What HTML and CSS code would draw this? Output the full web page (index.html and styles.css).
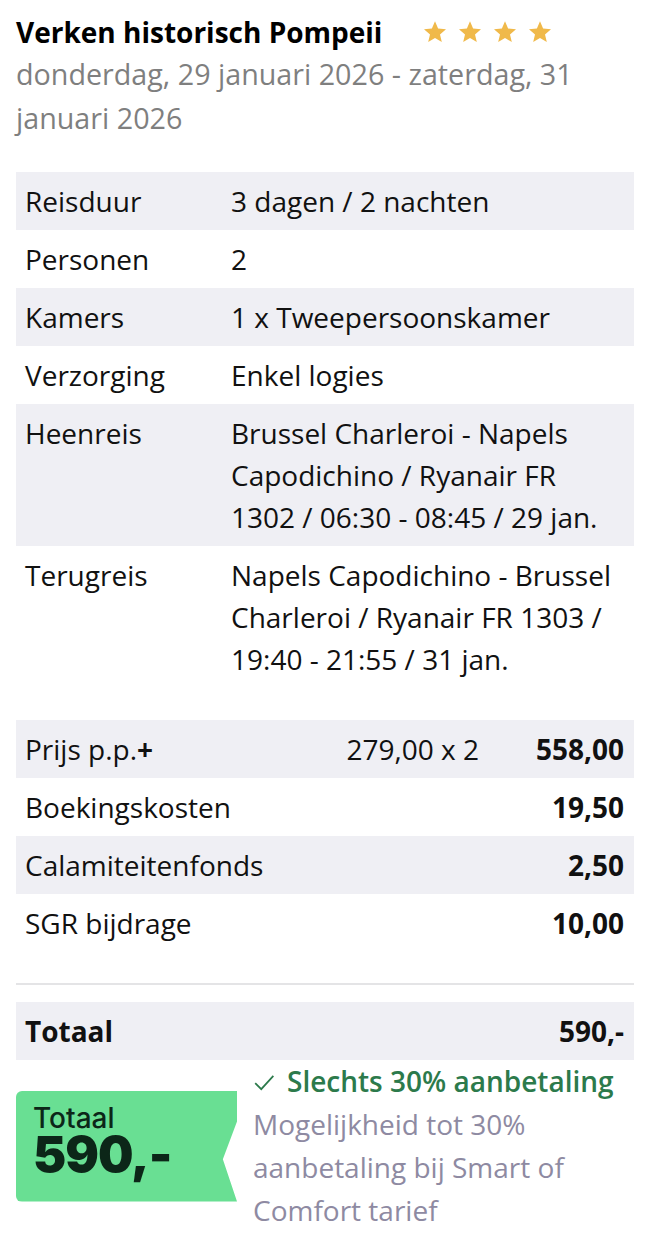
FILE: index.html
```html
<!DOCTYPE html>
<html lang="nl">
<head>
<meta charset="utf-8">
<title>Verken historisch Pompeii</title>
<link rel="stylesheet" href="styles.css">
</head>
<body>
<div class="page">
  <header class="header">
    <div class="title-row">
      <h1 class="title">Verken historisch Pompeii</h1>
      <div class="stars">
        <svg class="star" viewBox="0 0 24 24"><path d="M12 1.2l3.1 7.3 7.9.7-6 5.2 1.8 7.7L12 18l-6.8 4.1 1.8-7.7-6-5.2 7.9-.7z"/></svg>
        <svg class="star" viewBox="0 0 24 24"><path d="M12 1.2l3.1 7.3 7.9.7-6 5.2 1.8 7.7L12 18l-6.8 4.1 1.8-7.7-6-5.2 7.9-.7z"/></svg>
        <svg class="star" viewBox="0 0 24 24"><path d="M12 1.2l3.1 7.3 7.9.7-6 5.2 1.8 7.7L12 18l-6.8 4.1 1.8-7.7-6-5.2 7.9-.7z"/></svg>
        <svg class="star" viewBox="0 0 24 24"><path d="M12 1.2l3.1 7.3 7.9.7-6 5.2 1.8 7.7L12 18l-6.8 4.1 1.8-7.7-6-5.2 7.9-.7z"/></svg>
      </div>
    </div>
    <p class="dates">donderdag, 29 januari 2026 - zaterdag, 31 januari 2026</p>
  </header>

  <div class="info">
    <div class="info-row alt"><div class="info-label">Reisduur</div><div class="info-value">3 dagen / 2 nachten</div></div>
    <div class="info-row"><div class="info-label">Personen</div><div class="info-value">2</div></div>
    <div class="info-row alt"><div class="info-label">Kamers</div><div class="info-value">1 x Tweepersoonskamer</div></div>
    <div class="info-row"><div class="info-label">Verzorging</div><div class="info-value">Enkel logies</div></div>
    <div class="info-row alt"><div class="info-label">Heenreis</div><div class="info-value">Brussel Charleroi - Napels Capodichino / Ryanair FR 1302 / 06:30 - 08:45 / 29 jan.</div></div>
    <div class="info-row"><div class="info-label">Terugreis</div><div class="info-value">Napels Capodichino - Brussel Charleroi / Ryanair FR 1303 / 19:40 - 21:55 / 31 jan.</div></div>
  </div>

  <div class="prices">
    <div class="price-row alt"><div class="price-label">Prijs p.p.<b>+</b></div><div class="price-mid">279,00 x 2</div><div class="price-amount">558,00</div></div>
    <div class="price-row"><div class="price-label">Boekingskosten</div><div class="price-mid"></div><div class="price-amount">19,50</div></div>
    <div class="price-row alt"><div class="price-label">Calamiteitenfonds</div><div class="price-mid"></div><div class="price-amount">2,50</div></div>
    <div class="price-row"><div class="price-label">SGR bijdrage</div><div class="price-mid"></div><div class="price-amount">10,00</div></div>
  </div>

  <hr class="divider">

  <div class="total-row alt"><div class="total-label">Totaal</div><div class="total-amount">590,-</div></div>

  <div class="summary">
    <div class="badge">
      <div class="badge-label">Totaal</div>
      <div class="badge-price">590,-</div>
    </div>
    <div class="deposit">
      <div class="deposit-head"><svg class="check" viewBox="0 0 20 20"><polyline points="2,11 7.5,16.5 18.5,4.5"/></svg>Slechts 30% aanbetaling</div>
      <div class="deposit-text">Mogelijkheid tot 30% aanbetaling bij Smart of Comfort tarief</div>
    </div>
  </div>
</div>
</body>
</html>
```

FILE: styles.css
```css
* { box-sizing: border-box; }

body {
  margin: 0;
  background: #ffffff;
  font-family: "Open Sans", "Noto Sans", sans-serif;
  color: #111111;
}

.page {
  padding: 10px 28px 0 16px;
  width: 662px;
}

.title-row {
  display: flex;
  align-items: center;
  gap: 41px;
}

.title {
  margin: 0;
  font-size: 28px;
  line-height: 44px;
  font-weight: 700;
  color: #000;
}

.stars {
  display: flex;
  gap: 11px;
}

.star {
  width: 24px;
  height: 24px;
  fill: #f0b94a;
}

.dates {
  margin: -2px 0 0;
  font-size: 28.7px;
  line-height: 44px;
  color: #7f7f7f;
}

.info {
  margin-top: 32px;
}

.info-row {
  display: flex;
  padding: 8px 8px 8px 9px;
  font-size: 28px;
  line-height: 42px;
}

.alt { background: #efeff4; }

.info-label {
  width: 206px;
  flex: none;
}

.info-value {
  flex: 1;
}

.prices {
  margin-top: 32px;
}

.price-row {
  display: grid;
  grid-template-columns: 1fr auto 145px;
  padding: 8px 10px 8px 9px;
  font-size: 28px;
  line-height: 42px;
}

.price-mid { text-align: right; }

.price-amount {
  text-align: right;
  font-weight: 700;
}

.divider {
  margin: 31px 0 17px;
  border: none;
  height: 2px;
  background: #e4e4e6;
}

.total-row {
  display: flex;
  justify-content: space-between;
  padding: 8px 10px 8px 9px;
  font-size: 28px;
  line-height: 42px;
  font-weight: 700;
}

.summary {
  display: flex;
  align-items: center;
  gap: 16px;
}

.badge {
  flex: none;
  width: 221px;
  height: 111px;
  background: #69df93;
  border-radius: 6px 0 0 6px;
  clip-path: polygon(0 0, 100% 0, 100% 28%, 93.6% 62%, 100% 100%, 0 100%);
  padding: 13px 0 0 17px;
  color: #0c2618;
  font-family: Inter, "Liberation Sans", sans-serif;
}

.badge-label {
  font-size: 28px;
  line-height: 28px;
  font-weight: 500;
}

.badge-price {
  font-size: 50px;
  line-height: 44px;
  font-weight: 900;
  letter-spacing: -1px;
}

.deposit {
  flex: 1;
  font-size: 28px;
  line-height: 43px;
}

.deposit-head {
  color: #2c7a4b;
  font-weight: 600;
  display: flex;
  align-items: center;
}

.check {
  width: 22px;
  height: 22px;
  margin-right: 12px;
  fill: none;
  stroke: #2c7a4b;
  stroke-width: 1.6;
}

.deposit-text {
  color: #8e8aa2;
}
```
